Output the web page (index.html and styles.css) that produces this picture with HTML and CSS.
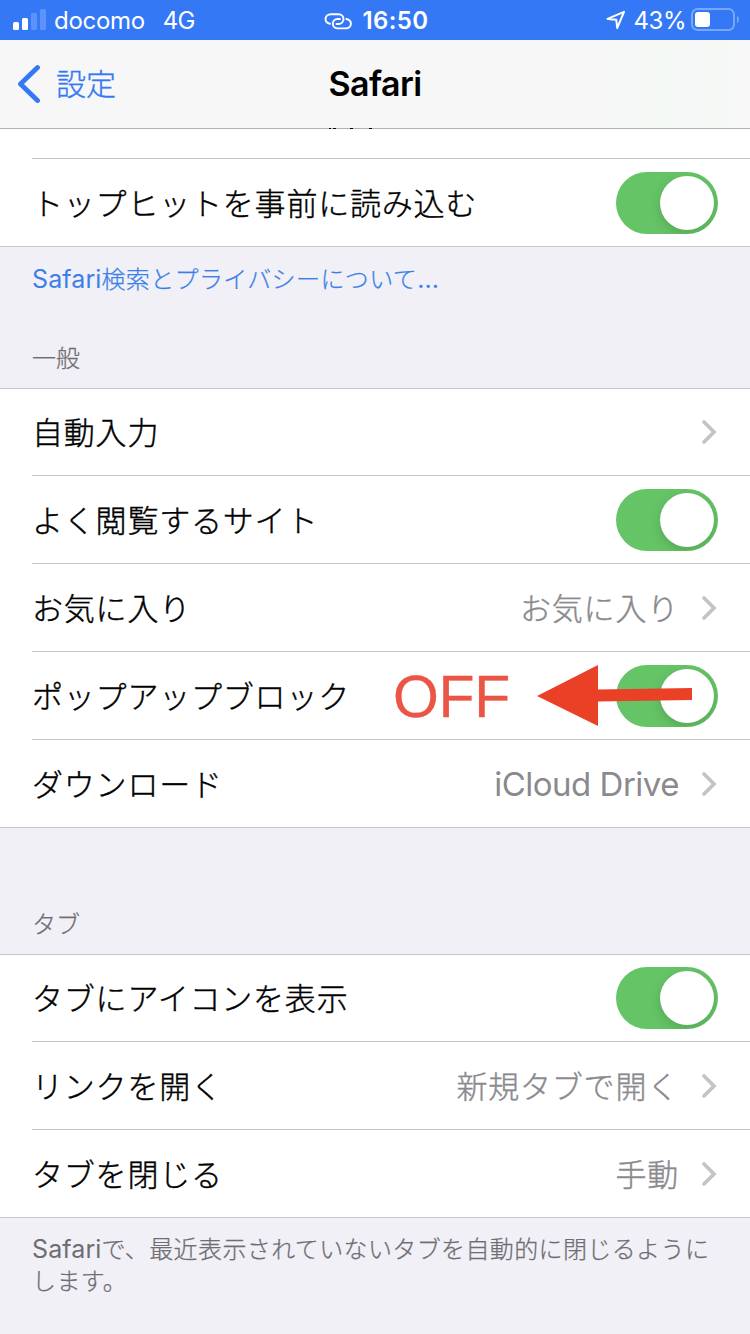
FILE: index.html
```html
<!DOCTYPE html>
<html lang="ja">
<head>
<meta charset="utf-8">
<title>Safari</title>
<link rel="stylesheet" href="styles.css">
</head>
<body>
<div class="status">
  <div class="status-left">
    <svg class="signal" width="34" height="22" viewBox="0 0 34 22"><rect x="0" y="13" width="6" height="8" rx="1.5" fill="#fff"/><rect x="9" y="9" width="6" height="12" rx="1.5" fill="#fff"/><rect x="18" y="4" width="6" height="17" rx="1.5" fill="#5b93f8"/><rect x="27" y="0" width="6" height="21" rx="1.5" fill="#5b93f8"/></svg>
    <span class="carrier">docomo</span>
    <span class="network">4G</span>
  </div>
  <div class="status-center">
    <svg class="link" width="28" height="18" viewBox="0 0 28 18" fill="none" stroke="#fff" stroke-width="1.9" stroke-linecap="round"><path d="M6 11.800C3.500 11.300 1.500 9.500 1.500 7C1.500 4 4 2.200 7 2.200H14.500C17.500 2.200 19.500 4.300 19.500 7C19.500 10 17.200 12 14.500 12H12.500"/><path d="M22.300 7C25 7.600 26.900 9.200 26.900 11.600C26.900 14.500 24.700 16.400 22 16.400H14C11 16.400 8.800 14.500 8.800 11.700C8.800 9 10.800 7 13.500 7H16"/></svg>
    <span class="clock">16:50</span>
  </div>
  <div class="status-right">
    <svg class="loc" width="20" height="20" viewBox="0 0 20 20" fill="none" stroke="#fff" stroke-width="2" stroke-linejoin="round"><path d="M1.500 8.900L18 1.800L11.200 18L10.300 9.700Z"/></svg>
    <span class="percent">43%</span>
    <svg class="battery" width="49" height="24" viewBox="0 0 49 24"><rect x="1" y="1" width="42" height="21" rx="5.500" fill="none" stroke="#78a7fa" stroke-width="2"/><rect x="4" y="4" width="15" height="15" rx="3" fill="#fff"/><path d="M46 8C48.600 9 48.600 14 46 15Z" fill="#78a7fa"/></svg>
  </div>
</div>
<header class="nav">
  <a class="back"><svg width="24" height="40" viewBox="0 0 24 40" fill="none" stroke="#3478f6" stroke-width="4.800" stroke-linecap="round" stroke-linejoin="round"><path d="M21.500 3.500L4.500 20L21.500 36.500"/></svg><span>設定</span></a>
  <h1>Safari</h1>
  <svg class="clipped" width="46" height="2" viewBox="0 0 46 2"><path d="M1 0h2v1h-2zM5 0h3v1h-3zM22 0h3v1h-3zM41 0h3v1h-3z"/></svg>
</header>
<main>
  <section class="group group-top">
    <div class="partial"></div>
    <div class="row"><span class="label">トップヒットを事前に読み込む</span><span class="toggle"></span></div>
  </section>
  <p class="note link-note"><span class="latin">Safari</span>検索とプライバシーについて<span class="latin">...</span></p>
  <h2 class="heading">一般</h2>
  <section class="group">
    <div class="row"><span class="label">自動入力</span><svg class="chev" viewBox="0 0 16 26"><path d="M3 3L13 13L3 23"/></svg></div>
    <div class="row"><span class="label">よく閲覧するサイト</span><span class="toggle"></span></div>
    <div class="row"><span class="label">お気に入り</span><span class="value">お気に入り</span><svg class="chev" viewBox="0 0 16 26"><path d="M3 3L13 13L3 23"/></svg></div>
    <div class="row marked"><span class="label">ポップアップブロック</span><span class="toggle"></span>
      <span class="off">OFF</span>
      <svg class="arrow" width="156" height="62" viewBox="0 0 156 62"><path d="M0 31L61 0V24.500L155 23V35L61 36.500V61Z" fill="#ea4025"/></svg>
    </div>
    <div class="row"><span class="label">ダウンロード</span><span class="value value-latin">iCloud Drive</span><svg class="chev" viewBox="0 0 16 26"><path d="M3 3L13 13L3 23"/></svg></div>
  </section>
  <h2 class="heading heading-tab">タブ</h2>
  <section class="group">
    <div class="row"><span class="label">タブにアイコンを表示</span><span class="toggle"></span></div>
    <div class="row"><span class="label">リンクを開く</span><span class="value">新規タブで開く</span><svg class="chev" viewBox="0 0 16 26"><path d="M3 3L13 13L3 23"/></svg></div>
    <div class="row"><span class="label">タブを閉じる</span><span class="value">手動</span><svg class="chev" viewBox="0 0 16 26"><path d="M3 3L13 13L3 23"/></svg></div>
  </section>
  <p class="note"><span class="latin">Safari</span>で、最近表示されていないタブを自動的に閉じるように<br>します。</p>
</main>
</body>
</html>
```

FILE: styles.css
```css
* { box-sizing: border-box; }
body {
  margin: 0;
  width: 750px;
  height: 1334px;
  overflow: hidden;
  background: #f1f0f6;
  color: #000;
  font-family: Inter, "Noto Sans CJK JP", sans-serif;
}
h1, h2, p { margin: 0; font-weight: 400; }
svg { display: block; flex: none; }

.status {
  display: grid;
  grid-template-columns: 1fr auto 1fr;
  align-items: center;
  height: 40px;
  padding: 0 10px 0 13px;
  background: #3478f6;
  color: #fff;
  font-size: 24px;
  line-height: 38px;
  white-space: nowrap;
}
.status span { padding-top: 2px; }
.status-left, .status-center, .status-right { display: flex; align-items: center; }
.status-right { justify-content: flex-end; }
.carrier { margin-left: 7px; letter-spacing: -0.3px; }
.network { margin-left: 18px; letter-spacing: -0.7px; }
.link { margin-top: 1px; }
.clock { margin-left: 10px; font-weight: 600; letter-spacing: 0.4px; }
.percent { margin: 0 5px 0 8px; letter-spacing: -0.5px; }

.nav {
  position: relative;
  display: grid;
  grid-template-columns: 1fr auto 1fr;
  align-items: center;
  height: 89px;
  padding: 0 16px;
  background: linear-gradient(90deg, #f7f7f7 75%, #f4f8f5 88%, #f7f8f7);
  border-bottom: 1px solid #b2b2b4;
}
.nav h1 { font-size: 34px; font-weight: 600; letter-spacing: -0.6px; line-height: 86px; }
.back { display: flex; align-items: center; gap: 16px; color: #3478f6; font-size: 30px; line-height: 86px; font-weight: 300; }
.back span { -webkit-text-stroke: 0.35px currentColor; }
/* lower edge of the row text scrolled under the bar */
.clipped { position: absolute; left: 328px; bottom: -2px; }

.group { background: #fff; border-top: 1px solid #c6c6c8; border-bottom: 1px solid #c6c6c8; }
.group-top { border-top: 0; }
.partial { height: 30px; margin-left: 32px; border-bottom: 1px solid #c6c6c8; }
.row {
  display: flex;
  align-items: center;
  height: 88px;
  margin-left: 32px;
  padding: 1px 32px 0 0;
  border-bottom: 1px solid #c6c6c8;
  font-size: 31px;
  letter-spacing: 0.8px;
  white-space: nowrap;
}
.row:first-child { height: 87px; padding-top: 0; }
.row:last-child { height: 87px; border-bottom: 0; }
.label, .value { padding-bottom: 4px; font-weight: 300; -webkit-text-stroke: 0.4px currentColor; }
.label { flex: 1; }
.value { color: #8a8a8e; margin-right: 22px; }
.value-latin { font-size: 33px; font-weight: 400; letter-spacing: -0.5px; padding-bottom: 0; -webkit-text-stroke: 0; }
.chev { width: 16px; height: 26px; margin-right: 1px; fill: none; stroke: #c4c4c6; stroke-width: 3.7; stroke-linecap: round; stroke-linejoin: miter; }
.toggle {
  display: flex;
  flex: none;
  justify-content: flex-end;
  width: 102px;
  height: 62px;
  padding: 4px;
  border-radius: 31px;
  background: #65c466;
  overflow: hidden;
}
.toggle::after {
  content: "";
  width: 54px;
  height: 54px;
  border-radius: 50%;
  background: #fff;
  box-shadow: 0 4px 12px rgba(0, 0, 0, 0.15);
}

.marked { position: relative; }
.off { position: absolute; left: 361px; top: 0; line-height: 90px; font-size: 59px; letter-spacing: -0.3px; color: #eb5545; font-family: "Liberation Sans", sans-serif; -webkit-text-stroke: 0.3px #eb5545; }
.arrow { position: absolute; left: 505px; top: 13px; }

.note { padding: 16px 32px 0; font-size: 24px; line-height: 32px; letter-spacing: 0.38px; color: #6d6d72; white-space: nowrap; font-weight: 300; -webkit-text-stroke: 0.25px currentColor; }
.link-note { color: #3b7fe8; padding-top: 17px; }
.latin { font-size: 25px; letter-spacing: 0.1px; font-weight: 400; line-height: 1; -webkit-text-stroke: 0; }
.heading { padding: 47px 32px 13px; font-size: 24px; line-height: 32px; color: #6d6d72; font-weight: 300; -webkit-text-stroke: 0.25px currentColor; }
.heading-tab { padding-top: 81px; }
```
